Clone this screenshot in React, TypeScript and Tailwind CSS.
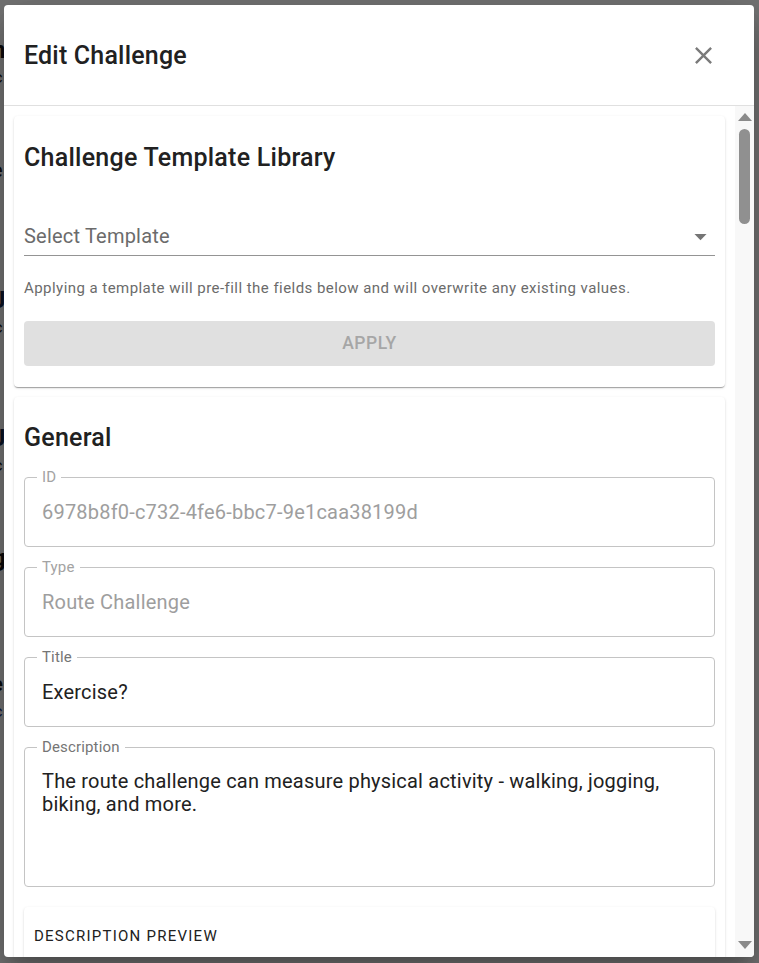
import React from "react";

const font = "font-['Roboto','Liberation_Sans',sans-serif]";

function CloseIcon() {
  return (
    <svg viewBox="0 0 24 24" className="h-[29px] w-[29px]" fill="#7b7b7b">
      <path d="M19 6.41 17.59 5 12 10.59 6.41 5 5 6.41 10.59 12 5 17.59 6.41 19 12 13.41 17.59 19 19 17.59 13.41 12z" />
    </svg>
  );
}

function DropIcon() {
  return (
    <svg viewBox="0 0 24 24" className="h-[29px] w-[29px]" fill="#757575">
      <path d="M7 10l5 5 5-5z" />
    </svg>
  );
}

interface FieldProps {
  label: string;
  value: string;
  disabled?: boolean;
  tall?: boolean;
}

function OutlinedField({ label, value, disabled, tall }: FieldProps) {
  return (
    <div
      className={`relative rounded-[4px] border border-[#c4c4c4] px-[17px] ${
        tall ? "h-[140px] pt-[22px]" : "flex h-[70px] items-center"
      }`}
    >
      <span
        className={`absolute -top-[10px] left-[12px] bg-white px-[5px] text-[15px] leading-[18px] tracking-[0.01em] ${
          disabled ? "text-[#a3a3a3]" : "text-[#757575]"
        }`}
      >
        {label}
      </span>
      <p
        className={`text-[20px] leading-[23px] tracking-[0.01em] ${
          disabled ? "text-[#9e9e9e]" : "text-[#212121]"
        }`}
      >
        {value}
      </p>
    </div>
  );
}

function Scrollbar() {
  return (
    <div className="flex w-[19px] flex-col items-center bg-[#f8f8f8]">
      <div className="flex h-[22px] items-center">
        <svg width="14" height="8" viewBox="0 0 14 8">
          <path d="M7 0 14 8H0z" fill="#8a8a8a" />
        </svg>
      </div>
      <div className="mt-[1px] h-[95px] w-[11px] rounded-full bg-[#909090]" />
      <div className="flex-1" />
      <div className="flex h-[24px] items-center">
        <svg width="14" height="8" viewBox="0 0 14 8">
          <path d="M0 0h14L7 8z" fill="#8a8a8a" />
        </svg>
      </div>
    </div>
  );
}

const paper =
  "rounded-[4px] bg-white shadow-[0px_2px_1px_-1px_rgba(0,0,0,0.2),0px_1px_1px_0px_rgba(0,0,0,0.14),0px_1px_3px_0px_rgba(0,0,0,0.12)]";

export default function App() {
  return (
    <div className={`relative h-[963px] w-[759px] overflow-hidden bg-white ${font}`}>
      {/* page behind the dialog, only a sliver shows on the left */}
      <div className="flex flex-col text-[#1a1a1a]">
        <p className="ml-[-8px] mt-[36px] text-[24px] font-bold leading-[28px]">n</p>
        <p className="ml-[-6px] mt-[4px] text-[16px] leading-[20px]">c</p>
        <p className="ml-[-8px] mt-[70px] text-[20px] leading-[24px]">e</p>
        <p className="ml-[-8px] mt-[104px] text-[24px] font-bold leading-[28px] text-[#1a2a4a]">J</p>
        <p className="ml-[-6px] mt-[4px] text-[16px] leading-[20px]">c</p>
        <p className="ml-[-8px] mt-[86px] text-[24px] font-bold leading-[28px] text-[#1a2a4a]">J</p>
        <p className="ml-[-6px] mt-[4px] text-[16px] leading-[20px]">c</p>
        <p className="ml-[-8px] mt-[68px] text-[24px] font-bold leading-[28px]">g</p>
        <p className="ml-[-8px] mt-[100px] text-[20px] font-bold leading-[24px]">e</p>
        <p className="ml-[-6px] mt-[6px] text-[16px] leading-[20px] text-[#1a3a8a]">c</p>
      </div>

      {/* backdrop + dialog */}
      <div className="absolute inset-0 bg-[rgba(0,0,0,0.55)] pl-[4px] pt-[5px]">
        <div className="flex h-[952px] w-[750px] flex-col overflow-hidden rounded-[4px] bg-white shadow-[0px_11px_15px_-7px_rgba(0,0,0,0.2),0px_24px_38px_3px_rgba(0,0,0,0.14),0px_9px_46px_8px_rgba(0,0,0,0.12)]">
          <div className="flex h-[101px] shrink-0 items-center justify-between border-b border-[#e0e0e0] pl-[20px] pr-[36px] pt-[1px]">
            <h2 className="text-[25px] font-medium leading-[32px] tracking-[0.0075em] text-[#212121]">
              Edit Challenge
            </h2>
            <CloseIcon />
          </div>

          <div className="flex min-h-0 flex-1">
            <div className="flex-1 overflow-hidden px-[10px] pt-[10px]">
              <section className={`${paper} px-[10px] pb-[21px] pt-[10px]`}>
                <h3 className="mt-[16px] text-[25px] font-medium leading-[32px] tracking-[0.01em] text-[#212121]">
                  Challenge Template Library
                </h3>
                <div className="flex h-[82px] items-end">
                  <div className="flex h-[38px] w-full items-center justify-between border-b border-[#949494]">
                    <span className="text-[20px] leading-[23px] tracking-[0.01em] text-[#6b6b6b]">
                      Select Template
                    </span>
                    <DropIcon />
                  </div>
                </div>
                <p className="mt-[22px] text-[15px] leading-[20px] tracking-[0.03em] text-[#6b6b6b]">
                  Applying a template will pre-fill the fields below and will overwrite any existing values.
                </p>
                <button className="mt-[23px] flex h-[45px] w-full items-center justify-center rounded-[4px] bg-[#e0e0e0] text-[17.5px] font-medium tracking-[0.03em] text-[#a6a6a6]">
                  APPLY
                </button>
              </section>

              <section className={`${paper} mt-[10px] px-[10px] pb-[20px] pt-[10px]`}>
                <h3 className="mt-[15px] text-[25px] font-medium leading-[32px] tracking-[0.01em] text-[#212121]">
                  General
                </h3>
                <div className="mt-[23px] flex flex-col gap-[20px]">
                  <OutlinedField label="ID" value="6978b8f0-c732-4fe6-bbc7-9e1caa38199d" disabled />
                  <OutlinedField label="Type" value="Route Challenge" disabled />
                  <OutlinedField label="Title" value="Exercise?" />
                  <OutlinedField
                    label="Description"
                    value="The route challenge can measure physical activity - walking, jogging, biking, and more."
                    tall
                  />
                  <div className={`${paper} h-[200px] px-[10px] pt-[10px]`}>
                    <p className="text-[15px] uppercase leading-[38px] tracking-[0.083em] text-[#212121]">
                      Description Preview
                    </p>
                  </div>
                </div>
              </section>
            </div>
            <Scrollbar />
          </div>
        </div>
      </div>
    </div>
  );
}
